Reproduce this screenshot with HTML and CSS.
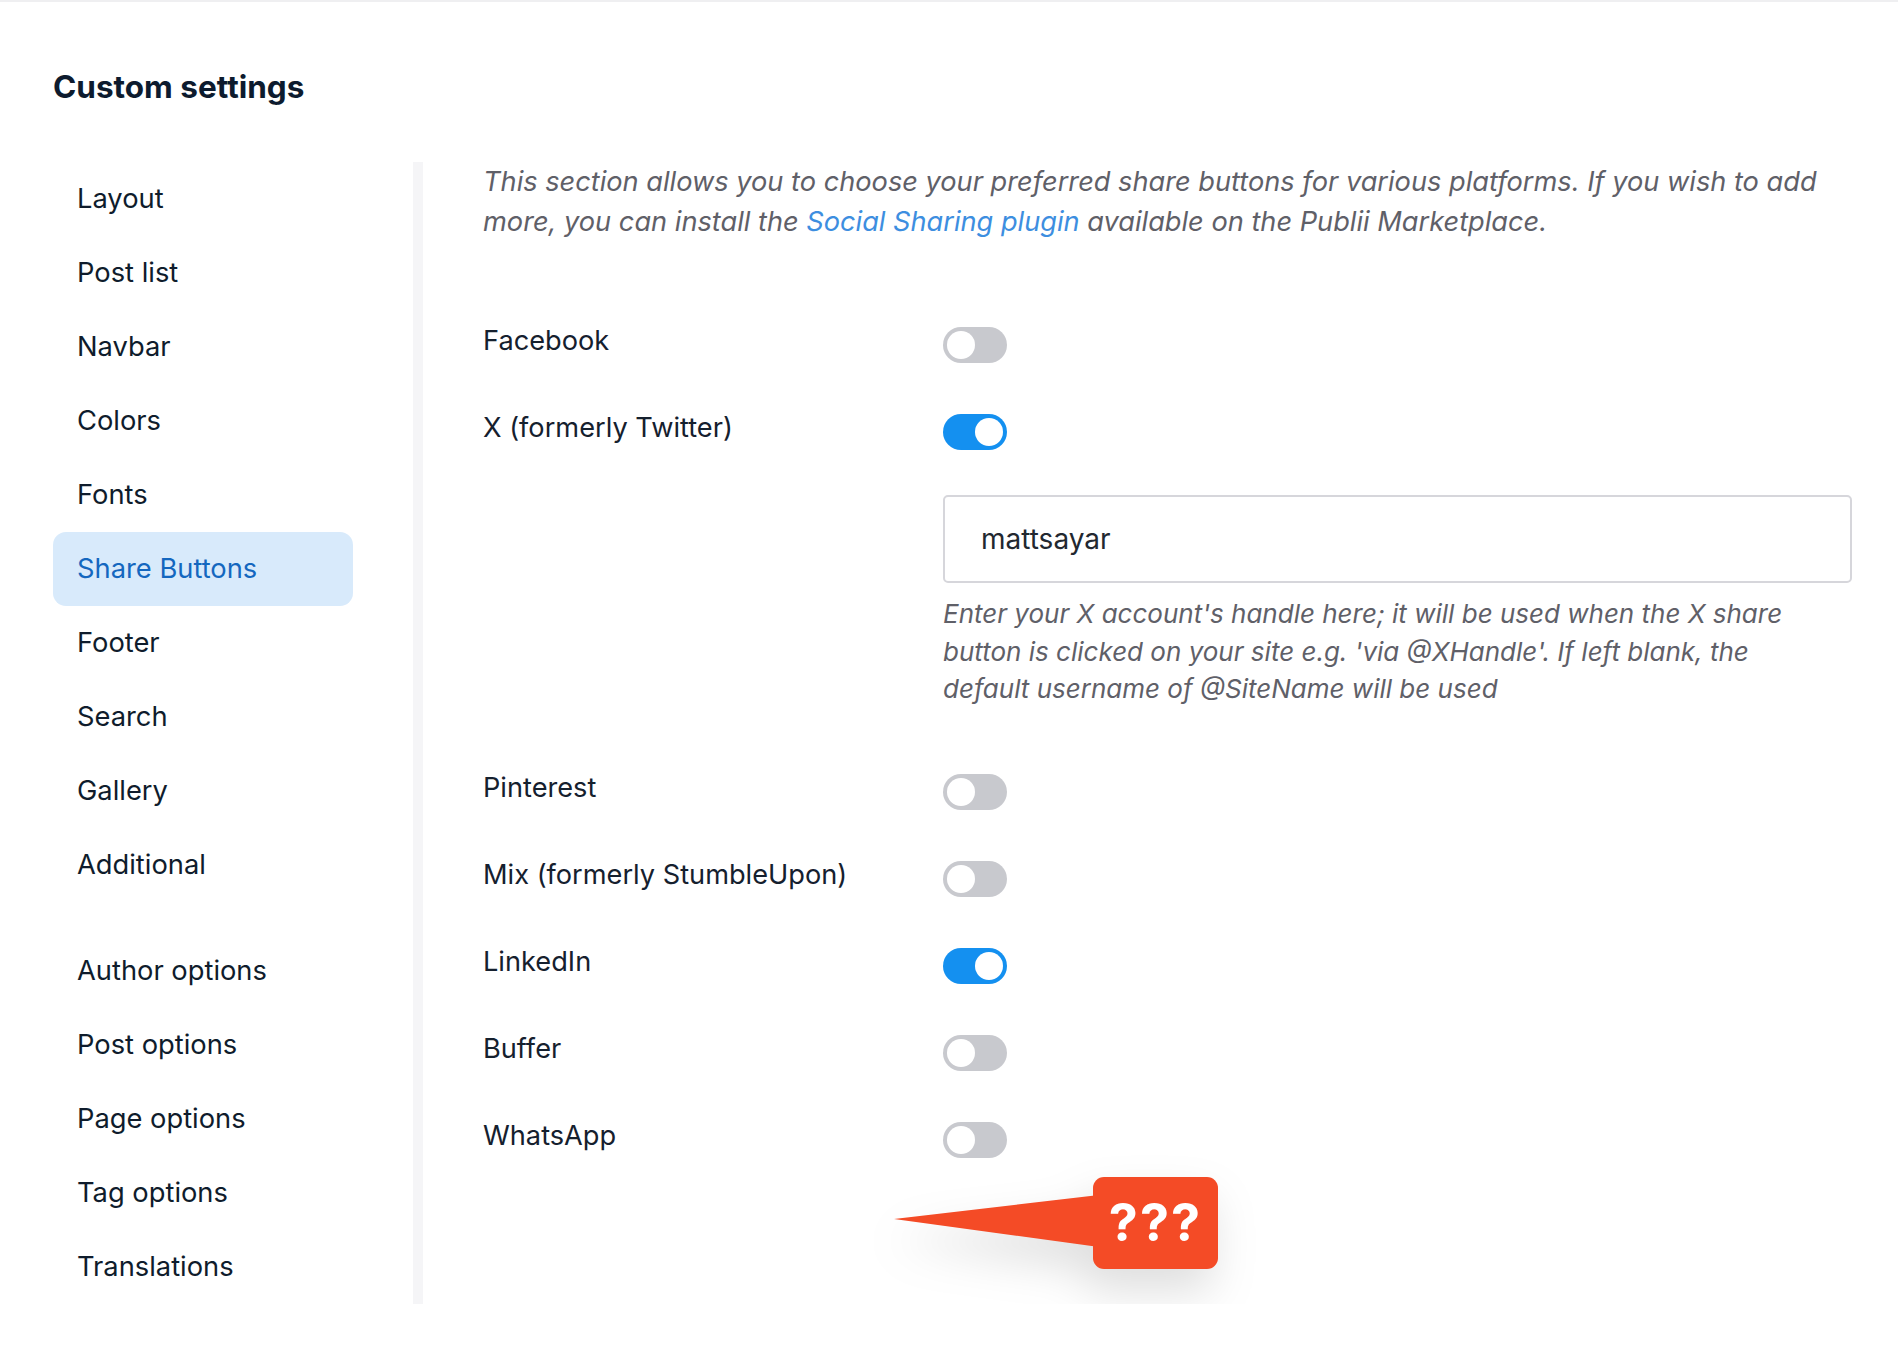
FILE: index.html
```html
<!DOCTYPE html>
<html lang="en">
<head>
<meta charset="utf-8">
<title>Custom settings</title>
<link rel="stylesheet" href="styles.css">
</head>
<body>
<div class="page">
  <h1 class="title">Custom settings</h1>
  <div class="layout">
    <nav class="sidebar">
      <ul class="nav-group">
        <li class="nav-item">Layout</li>
        <li class="nav-item">Post list</li>
        <li class="nav-item">Navbar</li>
        <li class="nav-item">Colors</li>
        <li class="nav-item">Fonts</li>
        <li class="nav-item active">Share Buttons</li>
        <li class="nav-item">Footer</li>
        <li class="nav-item">Search</li>
        <li class="nav-item">Gallery</li>
        <li class="nav-item">Additional</li>
      </ul>
      <ul class="nav-group">
        <li class="nav-item">Author options</li>
        <li class="nav-item">Post options</li>
        <li class="nav-item">Page options</li>
        <li class="nav-item">Tag options</li>
        <li class="nav-item">Translations</li>
      </ul>
    </nav>
    <main class="content">
      <p class="intro">This section allows you to choose your preferred share buttons for various platforms. If you wish to add more, you can install the <a class="link" href="#">Social Sharing plugin</a> available on the Publii Marketplace.</p>
      <div class="rows">
        <div class="row">
          <span class="label">Facebook</span>
          <div class="control"><span class="toggle"><span class="knob"></span></span></div>
        </div>
        <div class="row">
          <span class="label">X (formerly Twitter)</span>
          <div class="control">
            <span class="toggle on"><span class="knob"></span></span>
            <div class="field"><span class="field-value">mattsayar</span></div>
            <p class="help">Enter your X account's handle here; it will be used when the X share button is clicked on your site e.g. 'via @XHandle'. If left blank, the default username of @SiteName will be used</p>
          </div>
        </div>
        <div class="row">
          <span class="label">Pinterest</span>
          <div class="control"><span class="toggle"><span class="knob"></span></span></div>
        </div>
        <div class="row">
          <span class="label">Mix (formerly StumbleUpon)</span>
          <div class="control"><span class="toggle"><span class="knob"></span></span></div>
        </div>
        <div class="row">
          <span class="label">LinkedIn</span>
          <div class="control"><span class="toggle on"><span class="knob"></span></span></div>
        </div>
        <div class="row">
          <span class="label">Buffer</span>
          <div class="control"><span class="toggle"><span class="knob"></span></span></div>
        </div>
        <div class="row">
          <span class="label">WhatsApp</span>
          <div class="control"><span class="toggle"><span class="knob"></span></span></div>
        </div>
      </div>
      <div class="callout">
        <svg class="callout-tail" width="210" height="60" viewBox="0 0 210 60"><polygon points="0,24 205,0 205,52" fill="#f44b26"/></svg>
        <div class="callout-box">???</div>
      </div>
    </main>
  </div>
</div>
</body>
</html>
```
FILE: styles.css
```css
* { box-sizing: border-box; }
html, body { margin: 0; padding: 0; background: #ffffff; }
body {
  font-family: Inter, "Noto Sans", "Liberation Sans", sans-serif;
  color: #15202e;
  border-top: 2px solid #efeff1;
}
.page { padding: 0 46px 0 53px; }
.title {
  margin: 0;
  padding-top: 64px;
  font-size: 31.5px;
  line-height: 42px;
  font-weight: 700;
  color: #0d1b2e;
}
.layout {
  display: flex;
  margin-top: 54px;
}
.sidebar {
  width: 370px;
  flex: none;
  border-right: 10px solid #f5f5f7;
}
.nav-group { list-style: none; margin: 0; padding: 0; width: 300px; }
.nav-group + .nav-group { margin-top: 32px; }
.nav-item {
  height: 74px;
  line-height: 74px;
  padding-left: 24px;
  font-size: 27.3px;
  color: #0f1c2c;
  border-radius: 13px;
}
.nav-item.active { background: #d8eafb; color: #1467bf; }
.content {
  flex: 1;
  padding-left: 60px;
  position: relative;
}
.intro {
  margin: 0;
  font-size: 27.2px;
  line-height: 40px;
  font-style: italic;
  color: #5f6068;
}
.link { color: #3d8ee0; text-decoration: none; }
.rows { margin-top: 85px; display: flex; flex-direction: column; gap: 51px; }
.row { display: flex; align-items: flex-start; }
.label {
  width: 460px;
  flex: none;
  font-size: 27.2px;
  line-height: 36px;
  margin-top: -4px;
  color: #15202e;
}
.control { flex: 1; display: flex; flex-direction: column; align-items: flex-start; }
.toggle {
  display: block;
  width: 64px;
  height: 36px;
  border-radius: 18px;
  background: #c8c9ce;
  padding: 4px;
  flex: none;
}
.knob {
  display: block;
  width: 28px;
  height: 28px;
  border-radius: 50%;
  background: #ffffff;
}
.toggle.on { background: #1490f0; }
.toggle.on .knob { margin-left: 28px; }
.field {
  margin-top: 45px;
  width: 100%;
  height: 88px;
  border: 2px solid #d6d6db;
  border-radius: 5px;
  padding-left: 36px;
  display: flex;
  align-items: center;
}
.field-value { font-size: 28px; color: #222830; }
.help {
  margin: 12px 0 15px;
  font-size: 26px;
  line-height: 37.5px;
  font-style: italic;
  color: #5f6068;
  padding-right: 40px;
}
.callout {
  position: absolute;
  left: 471px;
  top: 1015px;
  width: 330px;
  height: 100px;
  filter: drop-shadow(-6px 22px 22px rgba(0,0,0,0.13));
}
.callout-tail { position: absolute; left: 0; top: 18px; }
.callout-box {
  position: absolute;
  left: 199px;
  top: 0;
  width: 125px;
  height: 92px;
  background: #f44b26;
  border-radius: 11px;
  color: #ffffff;
  font-weight: 700;
  font-size: 52px;
  line-height: 92px;
  text-align: center;
  letter-spacing: 2px;
}
```
